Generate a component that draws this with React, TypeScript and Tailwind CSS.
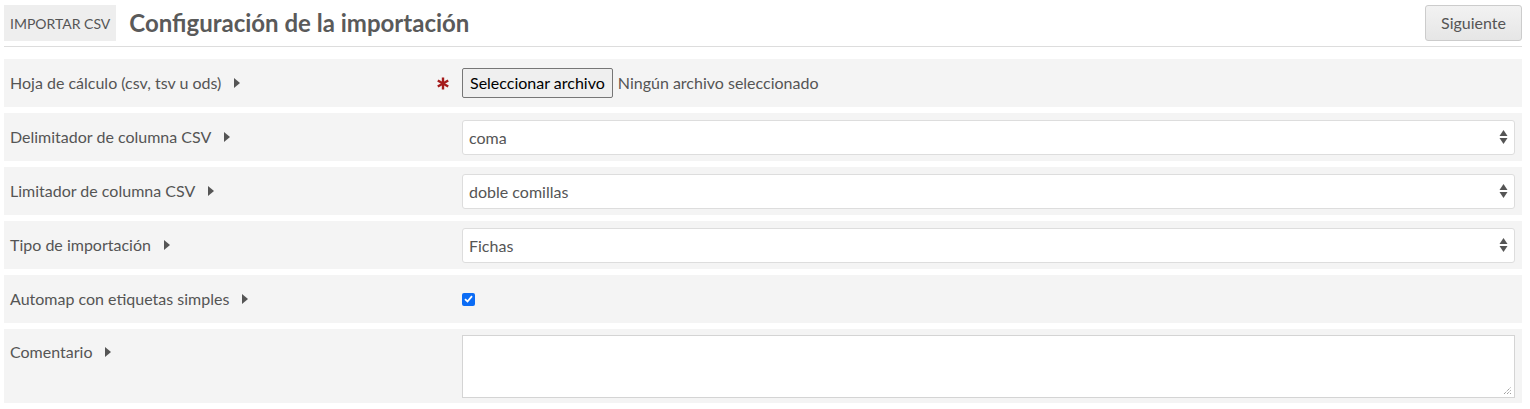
import React from "react";

const font = { fontFamily: "Lato, 'Noto Sans', sans-serif" };

function Caret() {
  return (
    <svg width="6" height="10" viewBox="0 0 6 10" className="ml-[13px] inline-block">
      <path d="M0 0 L6 5 L0 10 Z" fill="#555" />
    </svg>
  );
}

function Arrows() {
  return (
    <svg width="9" height="16" viewBox="0 0 9 16" className="absolute right-[6px] top-1/2 -translate-y-1/2">
      <path d="M0.5 7 L4.5 1 L8.5 7 Z" fill="#555" />
      <path d="M0.5 9 L4.5 15 L8.5 9 Z" fill="#555" />
    </svg>
  );
}

function Row({ label, children, tall }: { label: string; children: React.ReactNode; tall?: boolean }) {
  return (
    <div className={`flex bg-[#f4f4f4] ${tall ? "h-[74px] items-start" : "h-[48px] items-center"}`}>
      <div className={`flex w-[458px] shrink-0 items-center pl-[6px] text-[16px] text-[#555] ${tall ? "pt-[11px]" : ""}`}>
        {label}
        <Caret />
      </div>
      <div className={`flex flex-1 items-center pr-[7px] ${tall ? "pt-[6px]" : ""}`}>{children}</div>
    </div>
  );
}

function Select({ value }: { value: string }) {
  return (
    <div className="relative flex h-[35px] w-full items-center rounded-[3px] border border-[#ddd] bg-white pl-[6px] pt-[1px] text-[16px] text-[#555]">
      {value}
      <Arrows />
    </div>
  );
}

export default function App() {
  return (
    <div className="min-h-[409px] bg-white px-[4px] pt-[5px]" style={font}>
      <div className="w-[1518px]">
        <div className="flex h-[42px] items-start justify-between border-b border-[#ddd]">
          <div className="flex items-center">
            <span className="flex h-[36px] items-center bg-[#eee] px-[6px] text-[14px] text-[#555]">IMPORTAR CSV</span>
            <h1 className="ml-[13px] text-[24px] font-bold text-[#5a5a5a]">Configuración de la importación</h1>
          </div>
          <button className="h-[36px] w-[97px] rounded-[3px] border border-[#ccc] bg-gradient-to-b from-[#f2f2f2] to-[#e6e6e6] text-[16px] text-[#555]">
            Siguiente
          </button>
        </div>

        <div className="mt-[12px] flex flex-col gap-[6px]">
          <div className="flex h-[48px] items-center bg-[#f4f4f4]">
            <div className="flex w-[458px] shrink-0 items-center pl-[6px] text-[16px] text-[#555]">
              <span className="flex flex-1 items-center">
                Hoja de cálculo (csv, tsv u ods)
                <Caret />
              </span>
              <svg width="12" height="13" viewBox="0 0 12 13" className="mr-[13px]">
                <g stroke="#a51b1b" strokeWidth="2.4" strokeLinecap="butt">
                  <path d="M6 0.5 V12.5" />
                  <path d="M0.8 3.5 L11.2 9.5" />
                  <path d="M0.8 9.5 L11.2 3.5" />
                </g>
              </svg>
            </div>
            <button className="h-[30px] rounded-[2px] border border-[#767676] bg-[#efefef] px-[7px] text-[16px] text-black">
              Seleccionar archivo
            </button>
            <span className="ml-[5px] text-[16px] text-[#555]">Ningún archivo seleccionado</span>
          </div>

          <Row label="Delimitador de columna CSV">
            <Select value="coma" />
          </Row>
          <Row label="Limitador de columna CSV">
            <Select value="doble comillas" />
          </Row>
          <Row label="Tipo de importación">
            <Select value="Fichas" />
          </Row>
          <Row label="Automap con etiquetas simples">
            <span className="flex h-[13px] w-[13px] items-center justify-center rounded-[2px] bg-[#0b6cf5]">
              <svg width="9" height="8" viewBox="0 0 9 8">
                <path d="M1 4.2 L3.5 6.5 L8 1.2" stroke="white" strokeWidth="1.8" fill="none" />
              </svg>
            </span>
          </Row>
          <Row label="Comentario" tall>
            <div className="relative h-[63px] w-full border border-[#d4d4d4] bg-white">
              <svg width="9" height="9" viewBox="0 0 9 9" className="absolute bottom-[2px] right-[2px]">
                <path d="M1 8 L8 1 M4 8 L8 4 M7 8 L8 7" stroke="#777" strokeWidth="1" strokeDasharray="1 1" />
              </svg>
            </div>
          </Row>
        </div>
      </div>
    </div>
  );
}
